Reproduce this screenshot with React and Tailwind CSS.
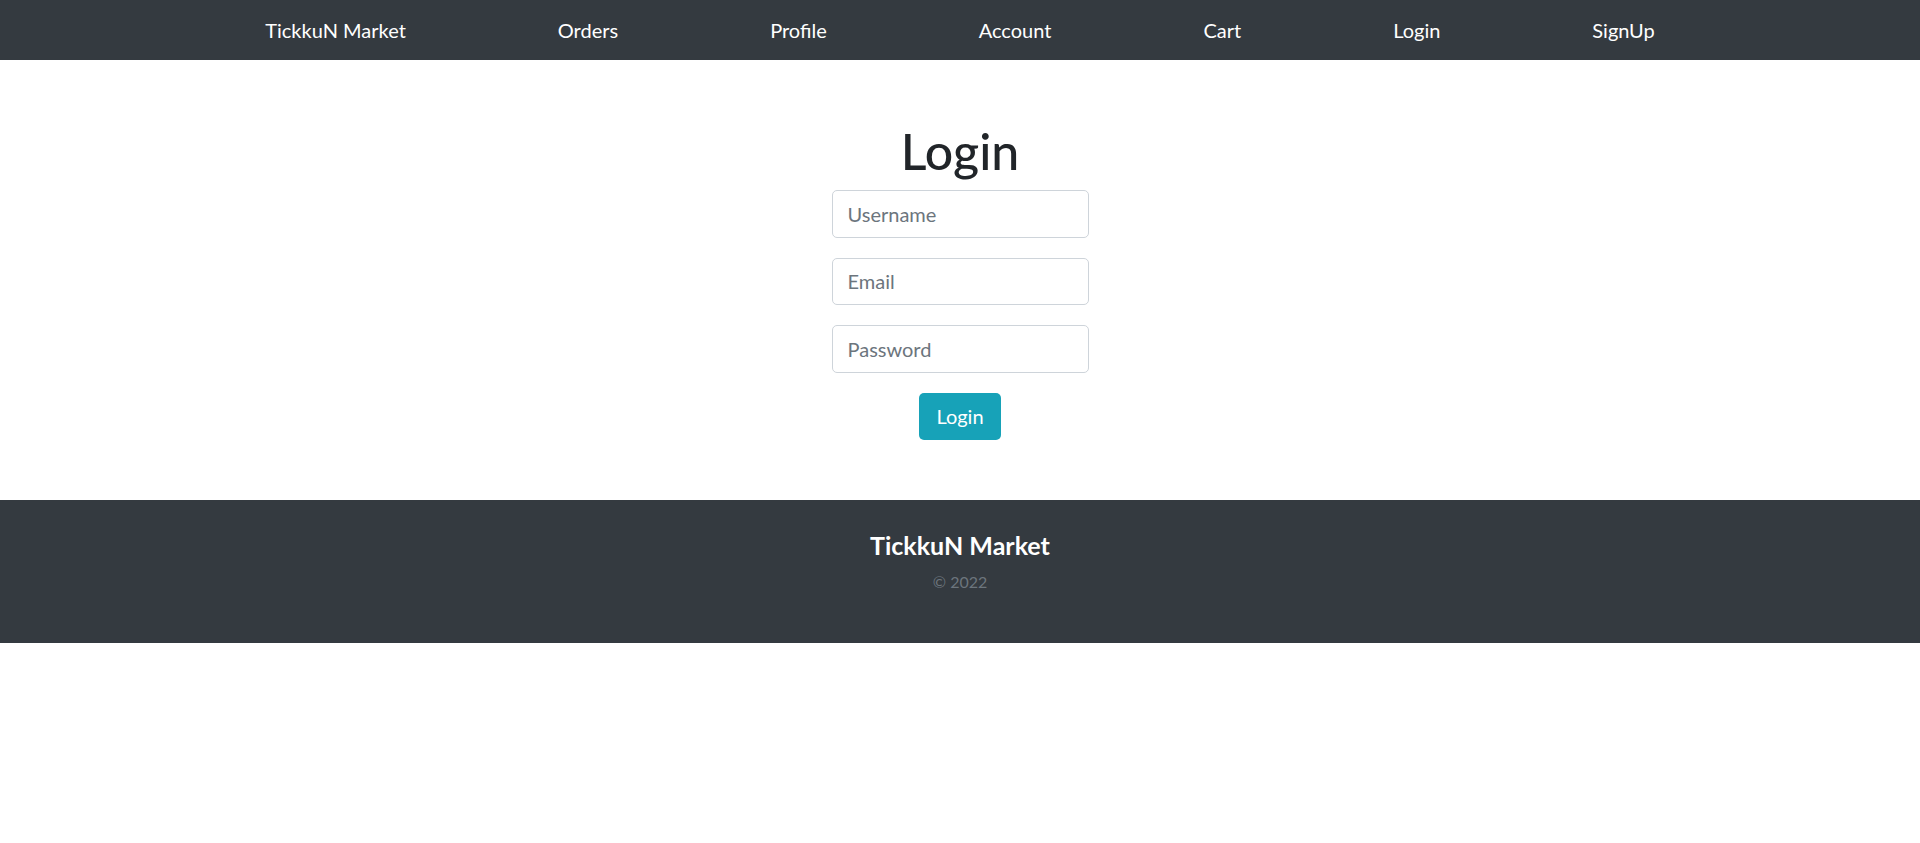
export default function App() {
  const links = ["TickkuN Market", "Orders", "Profile", "Account", "Cart", "Login", "SignUp"];
  return (
    <div className="min-h-[843px] bg-white" style={{ fontFamily: "Lato, 'Open Sans', sans-serif" }}>
      <nav className="h-[60px] bg-[#343a40] flex items-center justify-center gap-[152px]">
        {links.map((l) => (
          <a key={l} href="#" className="text-white text-[20px] leading-[30px]">
            {l}
          </a>
        ))}
      </nav>
      <main className="flex flex-col items-center pt-[61px] pb-[60px]">
        <h1 className="text-[50px] leading-[60px] text-[#212529] font-medium mb-[9px]">Login</h1>
        <form className="flex flex-col items-center">
          <input
            placeholder="Username"
            className="w-[257px] h-[47.5px] mb-[20px] border border-[#ced4da] rounded-[5px] px-[15px] text-[20px] text-[#495057] placeholder:text-[#6c757d] outline-none"
          />
          <input
            placeholder="Email"
            className="w-[257px] h-[47.5px] mb-[20px] border border-[#ced4da] rounded-[5px] px-[15px] text-[20px] text-[#495057] placeholder:text-[#6c757d] outline-none"
          />
          <input
            type="password"
            placeholder="Password"
            className="w-[257px] h-[47.5px] mb-[20px] border border-[#ced4da] rounded-[5px] px-[15px] text-[20px] text-[#495057] placeholder:text-[#6c757d] outline-none"
          />
          <button
            type="button"
            className="w-[82px] h-[47.5px] bg-[#17a2b8] text-white text-[20px] rounded-[5px]"
          >
            Login
          </button>
        </form>
      </main>
      <footer className="h-[143px] bg-[#343a40] flex flex-col items-center pt-[30px]">
        <div className="text-white text-[25px] leading-[30px] font-bold">TickkuN Market</div>
        <div className="mt-[10px] text-[#6c757d] text-[16px] leading-[24px]">© 2022</div>
      </footer>
    </div>
  );
}
